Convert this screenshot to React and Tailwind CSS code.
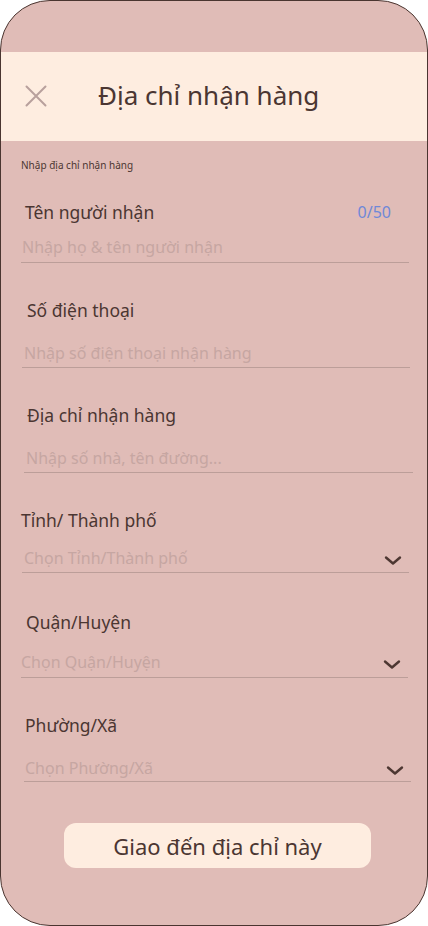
import React from "react";

const font = { fontFamily: '"Noto Sans", "Open Sans", sans-serif' };

function Chevron() {
  return (
    <svg width="18" height="11" viewBox="0 0 18 11" fill="none">
      <path d="M2 2.5 L9 8.5 L16 2.5" stroke="#4d3732" strokeWidth="2.4" strokeLinecap="round" strokeLinejoin="round" />
    </svg>
  );
}

const fields = [
  { label: "Tên người nhận", ph: "Nhập họ & tên người nhận", lw: "mt-[28px] pl-[24px]", pw: "mt-[12px] ml-[20px] mr-[18px] pl-[1px] pb-[4px]", count: true },
  { label: "Số điện thoại", ph: "Nhập số điện thoại nhận hàng", lw: "mt-[35px] pl-[26px]", pw: "mt-[20px] ml-[21px] mr-[17px] pl-[2px] pb-[3px]" },
  { label: "Địa chỉ nhận hàng", ph: "Nhập số nhà, tên đường...", lw: "mt-[35px] pl-[26px]", pw: "mt-[20px] ml-[23px] mr-[14px] pl-[2px] pb-[3px]" },
  { label: "Tỉnh/ Thành phố", ph: "Chọn Tỉnh/Thành phố", lw: "mt-[35px] pl-[20px]", pw: "mt-[15px] ml-[21px] mr-[18px] pl-[2px] pb-[3px]", sel: true },
  { label: "Quận/Huyện", ph: "Chọn Quận/Huyện", lw: "mt-[37px] pl-[25px]", pw: "mt-[17px] ml-[20px] mr-[19px] pl-0 pb-[4px]", sel: true },
  { label: "Phường/Xã", ph: "Chọn Phường/Xã", lw: "mt-[35px] pl-[24px]", pw: "mt-[20px] ml-[23px] mr-[16px] pl-[1px] pb-[2px]", sel: true },
];

export default function App() {
  return (
    <div className="w-[428px] h-[926px] bg-white" style={font}>
      <div className="w-[428px] h-[926px] border border-[#4a3530] rounded-[50px] overflow-hidden bg-[#e0bcb7] flex flex-col">
        <div className="h-[51px] shrink-0" />
        <div className="h-[89px] shrink-0 bg-[#feede0] flex items-center">
          <div className="ml-[24px] mt-[-2px] w-[22px] h-[22px] flex items-center justify-center">
            <svg width="22" height="22" viewBox="0 0 22 22" fill="none">
              <path d="M1.5 1.5 L20.5 20.5 M20.5 1.5 L1.5 20.5" stroke="#b8a09c" strokeWidth="2" strokeLinecap="round" />
            </svg>
          </div>
          <div className="ml-[51px] mt-[-4px] text-[26px] leading-[34px] text-[#4b3632]">Địa chỉ nhận hàng</div>
        </div>
        <div className="pt-[17px] pl-[20px] text-[10px] leading-[14px] text-[#4b3632]">Nhập địa chỉ nhận hàng</div>
        {fields.map((f, i) => (
          <div key={i} className="flex flex-col">
            <div className={`${f.lw} pr-[36px] flex items-center justify-between text-[17.5px] leading-[24px] text-[#4b3632]`}>
              <span>{f.label}</span>
              {f.count && <span className="text-[#6f88d8] text-[16px]">0/50</span>}
            </div>
            <div className={`${f.pw} flex items-center justify-between border-b border-[#bc9e99] text-[16px] leading-[22px] text-[#c6a6a2]`}>
              <span>{f.ph}</span>
              {f.sel && (
                <span className="mr-[7px] mt-[4px] flex items-center">
                  <Chevron />
                </span>
              )}
            </div>
          </div>
        ))}
        <div className="mt-[41px] flex justify-center pl-[7px]">
          <div className="w-[307px] h-[45px] rounded-[12px] bg-[#feede0] flex items-center justify-center text-[22px] leading-[30px] text-[#4b3632]">
            Giao đến địa chỉ này
          </div>
        </div>
      </div>
    </div>
  );
}
